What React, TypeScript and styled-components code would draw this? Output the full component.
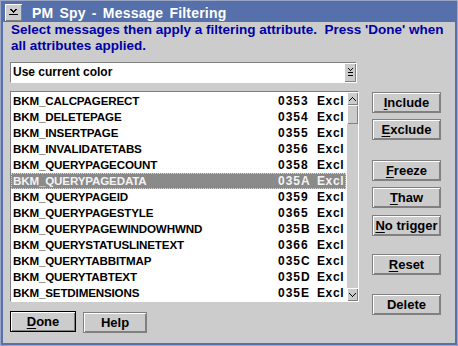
import { memo } from "react";
import styled, { createGlobalStyle } from "styled-components";

const FONT = `"Liberation Sans", Arial, sans-serif`;
const FACE = "#cccccc";
const SHADE = "#808080";
const TITLE_BLUE = "#5570aa";

const GlobalStyle = createGlobalStyle`
  html, body {
    margin: 0;
    padding: 0;
    background: ${FACE};
  }
  * {
    box-sizing: border-box;
  }
`;

const StyledWindow = styled.div`
  width: 458px;
  height: 346px;
  border: 3px solid ${TITLE_BLUE};
  outline: 1px solid #9aa6c4;
  outline-offset: -1px;
  background: ${FACE};
  display: flex;
  flex-flow: column;
  font-family: ${FONT};
  overflow: hidden;
`;

const StyledTitleBar = styled.div`
  flex: 0 0 19px;
  background: ${TITLE_BLUE};
  display: flex;
  align-items: center;
  padding-left: 2px;
  gap: 10px;
`;

const StyledSysMenu = styled.div`
  width: 17px;
  height: 17px;
  background: ${FACE};
  box-shadow: inset 1px 1px 0 #fff, inset -1px -1px 0 ${SHADE};
  display: flex;
  align-items: center;
  justify-content: center;
`;

const StyledTitle = styled.div`
  color: #fff;
  font-weight: 700;
  font-size: 14px;
  letter-spacing: 0.2px;
  word-spacing: 2px;
`;

const StyledClient = styled.div`
  flex: 1 1 auto;
  display: flex;
  flex-flow: column;
  padding: 0 0 0 7px;
`;

const StyledPrompt = styled.div`
  color: #0000a8;
  font-weight: 700;
  font-size: 13.5px;
  line-height: 16px;
  padding-left: 1px;
  white-space: pre;
`;

const StyledCombo = styled.div`
  margin-top: 8px;
  width: 347px;
  height: 21px;
  display: flex;
  border-top: 1px solid ${SHADE};
  border-left: 1px solid ${SHADE};
  border-bottom: 1px solid #fff;
  border-right: 1px solid #fff;
`;

const StyledComboField = styled.div`
  flex: 1 1 auto;
  background: #fff;
  font-weight: 700;
  font-size: 12px;
  line-height: 19px;
  padding-left: 2px;
`;

const StyledComboButton = styled.div`
  flex: 0 0 12px;
  background: ${FACE};
  box-shadow: inset 1px 1px 0 #fff, inset -1px -1px 0 ${SHADE};
  display: flex;
  align-items: center;
  justify-content: center;
`;

const StyledMain = styled.div`
  margin-top: 8px;
  height: 211px;
  display: flex;
  align-items: flex-start;
  gap: 13px;
`;

const StyledList = styled.div`
  width: 349px;
  height: 211px;
  display: flex;
  border-top: 1px solid ${SHADE};
  border-left: 1px solid ${SHADE};
  border-bottom: 1px solid #fff;
  border-right: 1px solid #fff;
`;

const StyledRows = styled.div`
  flex: 1 1 auto;
  background: #fff;
  padding-top: 1px;
  overflow: hidden;
`;

const StyledRow = styled.div<{ $selected?: boolean }>`
  height: 16px;
  display: grid;
  grid-template-columns: 265px 39px 1fr;
  padding-left: 2px;
  font-weight: 700;
  font-size: 11.6px;
  line-height: 16px;
  white-space: nowrap;
  color: ${(p) => (p.$selected ? "#f4f4f4" : "#000")};
  background: ${(p) => (p.$selected ? "#8a8a8a" : "transparent")};
  outline: ${(p) => (p.$selected ? "1px dotted #d8d8d8" : "none")};
  outline-offset: -1px;
`;

const StyledName = styled.span`
  letter-spacing: -0.15px;
`;

const StyledCode = styled.span`
  font-size: 12px;
  letter-spacing: 1px;
`;

const StyledClip = styled.span`
  font-size: 12px;
  overflow: hidden;
  letter-spacing: 0.6px;
`;

const StyledScrollBar = styled.div`
  flex: 0 0 12px;
  display: flex;
  flex-flow: column;
  background: ${FACE};
  border-left: 1px solid #fff;
`;

const StyledScrollArrow = styled.div`
  flex: 0 0 13px;
  background: ${FACE};
  box-shadow: inset 1px 1px 0 #fff, inset -1px -1px 0 ${SHADE};
  display: flex;
  align-items: center;
  justify-content: center;
`;

const StyledThumb = styled.div`
  flex: 0 0 19px;
  background: ${FACE};
  box-shadow: inset 1px 1px 0 #fff, inset -1px -1px 0 ${SHADE};
`;

const StyledTrack = styled.div`
  flex: 1 1 auto;
`;

const StyledButtons = styled.div`
  display: flex;
  flex-flow: column;
  padding-top: 1px;
`;

const StyledButton = styled.button<{ $top?: number; $width?: number; $default?: boolean }>`
  flex: 0 0 auto;
  width: ${(p) => p.$width ?? 69}px;
  height: 21px;
  margin: ${(p) => p.$top ?? 0}px 0 0 0;
  padding: 0;
  background: ${FACE};
  border: 1px solid ${(p) => (p.$default ? "#000" : SHADE)};
  box-shadow: inset 1px 1px 0 #fff, inset -1px -1px 0 ${SHADE};
  font-family: ${FONT};
  font-weight: 700;
  font-size: 13px;
  color: #000;
  display: flex;
  align-items: center;
  justify-content: center;

  u {
    text-decoration-thickness: 1px;
    text-underline-offset: 2px;
  }
`;

const StyledBottom = styled.div`
  margin-top: 9px;
  display: flex;
  gap: 7px;
  align-items: flex-start;
`;

const ROWS: [string, string][] = [
  ["BKM_CALCPAGERECT", "0353"],
  ["BKM_DELETEPAGE", "0354"],
  ["BKM_INSERTPAGE", "0355"],
  ["BKM_INVALIDATETABS", "0356"],
  ["BKM_QUERYPAGECOUNT", "0358"],
  ["BKM_QUERYPAGEDATA", "035A"],
  ["BKM_QUERYPAGEID", "0359"],
  ["BKM_QUERYPAGESTYLE", "0365"],
  ["BKM_QUERYPAGEWINDOWHWND", "035B"],
  ["BKM_QUERYSTATUSLINETEXT", "0366"],
  ["BKM_QUERYTABBITMAP", "035C"],
  ["BKM_QUERYTABTEXT", "035D"],
  ["BKM_SETDIMENSIONS", "035E"],
];

const SELECTED = "035A";

const DropGlyph = () => (
  <svg width="7" height="9" viewBox="0 0 7 9" shapeRendering="crispEdges">
    <path d="M1 0h1v1h-1zM5 0h1v1h-1zM2 1h1v1h-1zM4 1h1v1h-1zM3 2h1v1h-1zM1 4h5v1h-5zM1 7h5v1h-5z" fill="#000" />
  </svg>
);

const MenuGlyph = () => (
  <svg width="9" height="7" viewBox="0 0 9 7" shapeRendering="crispEdges">
    <path d="M1 0h2v1h-2zM6 0h2v1h-2zM2 1h2v1h-2zM5 1h2v1h-2zM3 2h3v1h-3zM4 3h1v1h-1zM0 5h9v1h-9z" fill="#000" />
  </svg>
);

const UpGlyph = () => (
  <svg width="7" height="4" viewBox="0 0 7 4" shapeRendering="crispEdges">
    <path d="M3 0h1v1h-1zM2 1h1v1h-1zM4 1h1v1h-1zM1 2h1v1h-1zM5 2h1v1h-1zM0 3h1v1h-1zM6 3h1v1h-1z" fill="#000" />
  </svg>
);

const DownGlyph = () => (
  <svg width="7" height="4" viewBox="0 0 7 4" shapeRendering="crispEdges">
    <path d="M0 0h1v1h-1zM6 0h1v1h-1zM1 1h1v1h-1zM5 1h1v1h-1zM2 2h1v1h-1zM4 2h1v1h-1zM3 3h1v1h-1z" fill="#000" />
  </svg>
);

const App = memo(() => (
  <>
    <GlobalStyle />
    <StyledWindow>
      <StyledTitleBar>
        <StyledSysMenu>
          <MenuGlyph />
        </StyledSysMenu>
        <StyledTitle>PM Spy - Message Filtering</StyledTitle>
      </StyledTitleBar>
      <StyledClient>
        <StyledPrompt>
          {"Select messages then apply a filtering attribute.  Press 'Done' when\nall attributes applied."}
        </StyledPrompt>
        <StyledCombo>
          <StyledComboField>Use current color</StyledComboField>
          <StyledComboButton>
            <DropGlyph />
          </StyledComboButton>
        </StyledCombo>
        <StyledMain>
          <StyledList>
            <StyledRows>
              {ROWS.map(([name, code]) => (
                <StyledRow key={code} $selected={code === SELECTED}>
                  <StyledName>{name}</StyledName>
                  <StyledCode>{code}</StyledCode>
                  <StyledClip>Excl</StyledClip>
                </StyledRow>
              ))}
            </StyledRows>
            <StyledScrollBar>
              <StyledScrollArrow>
                <UpGlyph />
              </StyledScrollArrow>
              <StyledThumb />
              <StyledTrack />
              <StyledScrollArrow>
                <DownGlyph />
              </StyledScrollArrow>
            </StyledScrollBar>
          </StyledList>
          <StyledButtons>
            <StyledButton>
              <u>I</u>nclude
            </StyledButton>
            <StyledButton $top={6}>
              <u>E</u>xclude
            </StyledButton>
            <StyledButton $top={20}>
              <u>F</u>reeze
            </StyledButton>
            <StyledButton $top={6}>
              <u>T</u>haw
            </StyledButton>
            <StyledButton $top={7}>
              <u>N</u>o trigger
            </StyledButton>
            <StyledButton $top={18}>
              <u>R</u>eset
            </StyledButton>
            <StyledButton $top={19}>Delete</StyledButton>
          </StyledButtons>
        </StyledMain>
        <StyledBottom>
          <StyledButton $width={66} $default>
            <u>D</u>one
          </StyledButton>
          <StyledButton $width={64} $top={1}>
            Help
          </StyledButton>
        </StyledBottom>
      </StyledClient>
    </StyledWindow>
  </>
));

export default App;
